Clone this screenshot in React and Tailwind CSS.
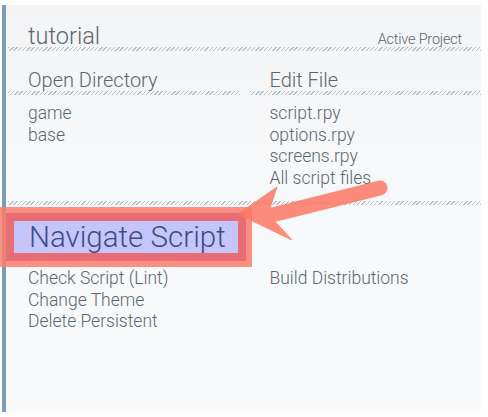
import React from 'react';

const hatch =
  'h-[4px] bg-[repeating-linear-gradient(-45deg,#b9bec4_0px,#b9bec4_1px,transparent_1px,transparent_3px)]';

function Item({ children }) {
  return <div className="leading-[21.7px] text-[17.5px]">{children}</div>;
}

export default function App() {
  return (
    <div
      className="relative w-[488px] h-[417px] overflow-hidden bg-[#fdfdfd] pt-[5px] pl-[2px] text-[#5b6671] font-light"
      style={{ fontFamily: 'Roboto, "Open Sans", sans-serif' }}
    >
      <div className="w-[479px] h-[407px] border-l-4 border-[#7b9db6] bg-gradient-to-b from-[#f3f4f5] via-[#f8f9fa] to-[#f8f9fa] pl-[2px]">
        {/* Project header */}
        <div className="flex items-end justify-between pl-[20px] pr-[19px] pt-[19px] h-[42px]">
          <div className="text-[23.5px] leading-[24px] -mb-[1px]">tutorial</div>
          <div className="text-[14.5px] leading-[14px] tracking-[-0.2px]">Active Project</div>
        </div>
        <div className={hatch} />

        {/* Directory / files */}
        <div className="grid grid-cols-2 gap-x-[10px]">
          <div>
            <div className="pl-[20px] text-[20px] leading-[22px] pt-[18px]">Open Directory</div>
            <div className={hatch} />
            <div className="pl-[20px] pt-[8px]">
              <Item>game</Item>
              <Item>base</Item>
            </div>
          </div>
          <div>
            <div className="pl-[20px] text-[20px] leading-[22px] pt-[18px]">Edit File</div>
            <div className={hatch} />
            <div className="pl-[20px] pt-[8px]">
              <Item>script.rpy</Item>
              <Item>options.rpy</Item>
              <Item>screens.rpy</Item>
              <Item>All script files</Item>
            </div>
          </div>
        </div>

        <div className={`${hatch} mt-[11px]`} />

        {/* Navigate (label drawn in the annotation layer) */}
        <div className="h-[63px]" />

        <div className="grid grid-cols-2 gap-x-[10px]">
          <div className="pl-[20px]">
            <Item>Check Script (Lint)</Item>
            <Item>Change Theme</Item>
            <Item>Delete Persistent</Item>
          </div>
          <div className="pl-[20px]">
            <Item>Build Distributions</Item>
          </div>
        </div>
      </div>

      {/* annotation box */}
      <div className="absolute left-0 top-[207px] w-[252px] h-[60px] bg-[#fb7e6c]/85 p-[6px]">
        <div className="w-full h-full bg-[#e0626e]/75 p-[8px]">
          <div className="w-full h-full bg-[#c4c6fb]" />
        </div>
      </div>
      <div className="absolute left-[29px] top-[220px] text-[29.5px] leading-[34px] text-[#3f4b88]">
        Navigate Script
      </div>

      {/* annotation arrow */}
      <svg className="absolute left-0 top-0" width="488" height="417" viewBox="0 0 488 417">
        <g opacity="0.85" fill="#fd7866" stroke="#fd7866">
          <line x1="268" y1="216" x2="380" y2="188" strokeWidth="15" strokeLinecap="round" />
          <polygon points="238,214 277,187 268,214 292,240" strokeWidth="1" strokeLinejoin="round" />
        </g>
      </svg>
    </div>
  );
}
